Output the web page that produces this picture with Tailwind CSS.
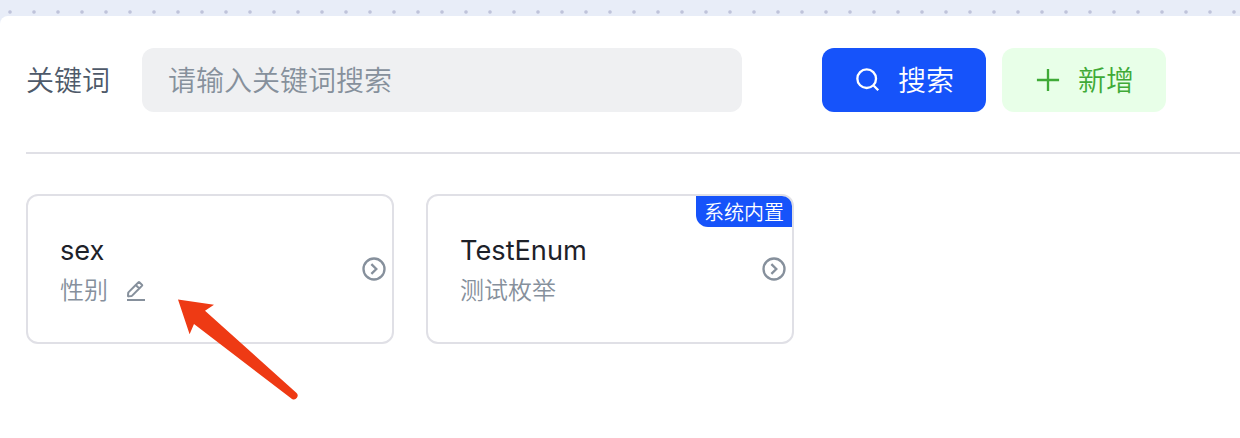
<!DOCTYPE html>
<html lang="zh-CN">
<head>
<meta charset="utf-8">
<title>枚举管理</title>
<script src="https://cdn.jsdelivr.net/npm/@tailwindcss/browser@4"></script>
</head>
<body class="h-[438px] overflow-hidden bg-[#e8edf8] bg-[radial-gradient(circle_at_10px_12px,#bfc3da_1.2px,transparent_2.3px)] bg-[length:24px_24px] pt-4 font-['Inter','Noto_Sans_CJK_SC',sans-serif] font-[350]">
<main class="relative h-[422px] rounded-tl-lg bg-white pl-[26px] pt-8">
  <div class="flex h-16 items-center text-[28px] leading-none">
    <label class="w-[116px] pt-0.5 text-[#4e5969]">关键词</label>
    <div class="flex h-16 w-[600px] items-center rounded-xl bg-[#eff0f2] pl-[26px] pt-0.5 text-[#86909c]">请输入关键词搜索</div>
    <button class="ml-20 flex h-16 w-[164px] items-center justify-center gap-4 rounded-xl bg-[#1653fa] text-white">
      <svg class="size-7" viewBox="0 0 48 48" fill="none" stroke="currentColor" stroke-width="4"><path d="M33.072 33.071c6.248-6.248 6.248-16.379 0-22.627-6.249-6.249-16.38-6.249-22.628 0-6.248 6.248-6.248 16.379 0 22.627 6.248 6.248 16.38 6.248 22.628 0Zm0 0 8.485 8.485"/></svg>
      <span class="pt-0.5">搜索</span>
    </button>
    <button class="ml-4 flex h-16 w-[164px] items-center justify-center gap-4 rounded-xl bg-[#e8ffe8] text-[#3faa37]">
      <svg class="size-7" viewBox="0 0 48 48" fill="none" stroke="currentColor" stroke-width="4"><path d="M5 24h38M24 5v38"/></svg>
      <span class="pt-0.5">新增</span>
    </button>
  </div>
  <div class="mt-10 h-0.5 bg-[#e0e0e6]"></div>
  <section class="mt-10 flex gap-8">
    <article class="relative h-[150px] w-[368px] rounded-xl border-2 border-[#e0e0e6] pl-8 pt-[37px]">
      <h3 class="text-[27.2px] font-normal leading-9 text-[#1d2129]">sex</h3>
      <div class="mt-[3px] flex h-9 items-center gap-4 text-2xl leading-9 text-[#86909c]">
        <span class="pt-0.5">性别</span>
        <svg class="mt-0.5 size-6" viewBox="0 0 48 48" fill="none" stroke="currentColor" stroke-width="4"><path d="m30.48 19.038 5.733-5.734a1 1 0 0 0 0-1.414l-5.586-5.586a1 1 0 0 0-1.414 0l-5.734 5.734m7 7L15.763 33.754a1 1 0 0 1-.59.286l-6.048.708a1 1 0 0 1-1.113-1.069l.477-6.31a1 1 0 0 1 .29-.631l14.7-14.7m7 7-7-7M6 42h36"/></svg>
      </div>
      <svg class="absolute right-1 top-[59px] size-7 text-[#86909c]" viewBox="0 0 48 48" fill="none" stroke="currentColor" stroke-width="4"><circle cx="24" cy="24" r="18"/><path d="M19.485 15.515 27.971 24l-8.486 8.485"/></svg>
    </article>
    <article class="relative h-[150px] w-[368px] rounded-xl border-2 border-[#e0e0e6] pl-8 pt-[37px]">
      <h3 class="text-[27.2px] font-normal leading-9 text-[#1d2129]">TestEnum</h3>
      <div class="mt-[3px] flex h-9 items-center text-2xl leading-9 text-[#86909c]"><span class="pt-0.5">测试枚举</span></div>
      <span class="absolute right-0 top-0 flex h-[31px] w-24 items-center justify-center rounded-bl-xl rounded-tr-[10px] bg-[#1653fa] pt-0.5 text-xl leading-none text-white">系统内置</span>
      <svg class="absolute right-1 top-[59px] size-7 text-[#86909c]" viewBox="0 0 48 48" fill="none" stroke="currentColor" stroke-width="4"><circle cx="24" cy="24" r="18"/><path d="M19.485 15.515 27.971 24l-8.486 8.485"/></svg>
    </article>
  </section>
  <svg class="absolute left-[165px] top-[269px] h-[125px] w-[150px]" viewBox="0 0 150 125" fill="#ee3a14"><path d="M13 14.5 49 19.8 40 25.7 131.3 107.8A3.8 3.8 0 0 1 127 114L29 39 24.6 49.3Z"/></svg>
</main>
</body>
</html>
